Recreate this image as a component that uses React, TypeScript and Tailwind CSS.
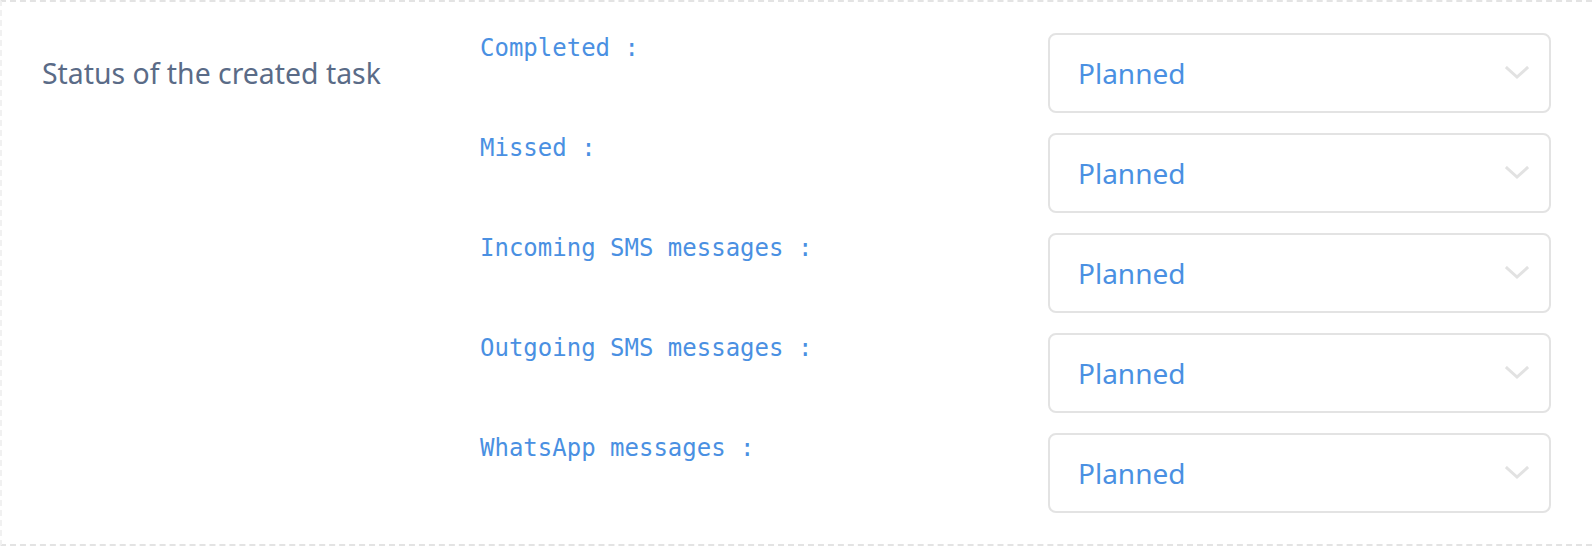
import React from "react";

const rows = [
  "Completed :",
  "Missed :",
  "Incoming SMS messages :",
  "Outgoing SMS messages :",
  "WhatsApp messages :",
];

function Chevron() {
  return (
    <svg width="24" height="14" viewBox="0 0 24 14" fill="none" className="shrink-0">
      <path d="M2 2 L12 11 L22 2" stroke="#e2e2e2" strokeWidth="3" strokeLinecap="square" />
    </svg>
  );
}

export default function App() {
  return (
    <div className="w-full bg-white">
      <div className="flex border-t-2 border-b-2 border-dashed border-t-[#e3e3e3] border-b-[#e3e3e3] border-l-2 border-l-[#f1f1f1] pt-[31px] pb-[31px]">
        <div className="w-[478px] shrink-0 pl-[40px]">
          <div
            className="h-[80px] flex items-center text-[28.4px] text-[#5a6b87]"
            style={{ fontFamily: '"Noto Sans", sans-serif' }}
          >
            Status of the created task
          </div>
        </div>
        <div className="flex flex-col gap-[20px] w-[1071px]">
          {rows.map((label) => (
            <div key={label} className="flex items-start">
              <div
                className="flex-1 text-[24px] leading-[28px] text-[#4a90e2] mt-[1px]"
                style={{ fontFamily: '"DejaVu Sans Mono", monospace' }}
              >
                {label}
              </div>
              <div className="w-[503px] h-[80px] border-2 border-[#e3e3e3] rounded-[8px] flex items-center justify-between pl-[28px] pr-[20px]">
                <span
                  className="text-[28px] text-[#4a90e2]"
                  style={{ fontFamily: '"Noto Sans", sans-serif' }}
                >
                  Planned
                </span>
                <Chevron />
              </div>
            </div>
          ))}
        </div>
      </div>
    </div>
  );
}
